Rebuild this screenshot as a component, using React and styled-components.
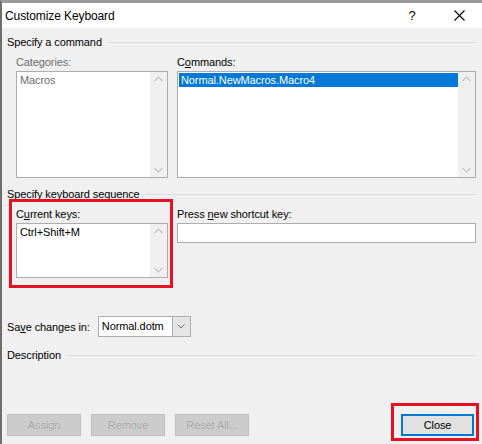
import styled, { createGlobalStyle } from 'styled-components';

const Global = createGlobalStyle`
  html, body { margin: 0; padding: 0; }
  body {
    font-family: "Liberation Sans", Arial, sans-serif;
    font-size: 11px;
    letter-spacing: -0.1px;
    color: #000;
    background: #f0f0f0;
  }
`;

const Window = styled.div`
  width: 482px;
  height: 444px;
  box-sizing: border-box;
  border-top: 3px solid #9b9b9b;
  border-left: 2px solid #6e6e6e;
  background: #f0f0f0;
  display: flex;
  flex-direction: column;
  overflow: hidden;
`;

const TitleBar = styled.div`
  height: 25px;
  background: #fff;
  display: flex;
  align-items: center;
  padding-left: 3px;
`;

const Title = styled.div`
  flex: 1;
  font-size: 12px;
  letter-spacing: -0.1px;
`;

const TitleButton = styled.div`
  width: ${p => p.w}px;
  height: 25px;
  margin-right: ${p => p.mr || 0}px;
  display: flex;
  align-items: center;
  justify-content: center;
  font-size: 13px;
`;

const Body = styled.div`
  flex: 1;
  display: flex;
  flex-direction: column;
  padding: 0 6px 0 5px;
`;

const GroupHeader = styled.div`
  display: flex;
  align-items: center;
  gap: 6px;
  height: 14px;
  line-height: 14px;
  margin-top: ${p => p.mt}px;
  white-space: nowrap;
  &::after {
    content: "";
    flex: 1;
    height: 1px;
    background: #dcdcdc;
  }
`;

const Row = styled.div`
  display: flex;
  gap: 9px;
  padding-left: 9px;
  margin-top: ${p => p.mt}px;
`;

const Column = styled.div`
  width: ${p => (p.w ? p.w + 'px' : 'auto')};
  flex: ${p => (p.w ? 'none' : 1)};
  display: flex;
  flex-direction: column;
  gap: 2px;
  position: relative;
  ${p => p.marked && `
    &::after {
      content: "";
      position: absolute;
      left: -7px;
      top: -8px;
      right: -5px;
      bottom: -10px;
      border: 3px solid #e81123;
      pointer-events: none;
    }
  `}
`;

const Label = styled.div`
  height: 14px;
  line-height: 14px;
  color: ${p => (p.disabled ? '#6d6d6d' : '#000')};
  white-space: nowrap;
`;

const ListBox = styled.div`
  height: ${p => p.h}px;
  box-sizing: border-box;
  border: 1px solid #adadad;
  background: #fff;
  display: flex;
`;

const ListItems = styled.div`
  flex: 1;
  padding: 1px 0 0 1px;
`;

const ListItem = styled.div`
  height: 14px;
  line-height: 14px;
  padding-left: 2px;
  white-space: nowrap;
  color: ${p => (p.selected ? '#fff' : p.disabled ? '#6d6d6d' : '#000')};
  background: ${p => (p.selected ? '#0078d7' : 'transparent')};
`;

const ScrollBar = styled.div`
  width: 17px;
  background: #f0f0f0;
  display: flex;
  flex-direction: column;
  justify-content: space-between;
  align-items: center;
  padding: 4px 0;
`;

const TextInput = styled.div`
  height: 20px;
  box-sizing: border-box;
  border: 1px solid #adadad;
  background: #fff;
`;

const SaveRow = styled.div`
  display: flex;
  align-items: center;
  gap: 8px;
  margin-top: 38px;
`;

const Combo = styled.div`
  width: 93px;
  height: 21px;
  box-sizing: border-box;
  border: 1px solid #adadad;
  background: #fff;
  display: flex;
`;

const ComboText = styled.div`
  flex: 1;
  padding-left: 3px;
  line-height: 19px;
`;

const ComboArrow = styled.div`
  width: 17px;
  background: #e5e5e5;
  border-left: 1px solid #adadad;
  display: flex;
  align-items: center;
  justify-content: center;
`;

const ButtonRow = styled.div`
  display: flex;
  gap: 10px;
  margin-top: 52px;
`;

const Button = styled.div`
  width: ${p => p.w}px;
  height: 22px;
  box-sizing: border-box;
  display: flex;
  align-items: center;
  justify-content: center;
  background: ${p => (p.disabled ? '#cccccc' : '#e1e1e1')};
  border: ${p => (p.primary ? '2px solid #0078d7' : '1px solid #bfbfbf')};
  color: ${p => (p.disabled ? '#a3a3a3' : '#000')};
  text-shadow: ${p => (p.disabled ? '0 0 1px #e8e8e8' : 'none')};
  position: relative;
  margin-left: ${p => (p.push ? 'auto' : '0')};
  margin-right: ${p => (p.push ? '2px' : '0')};
  ${p => p.marked && `
    &::after {
      content: "";
      position: absolute;
      left: -12px;
      top: -13px;
      right: -7px;
      bottom: -7px;
      border: 3px solid #e81123;
      pointer-events: none;
    }
  `}
`;

const Chevron = ({ up }) => (
  <svg width="9" height="6" viewBox="0 0 9 6">
    <polyline
      points={up ? '0.5,5 4.5,1 8.5,5' : '0.5,1 4.5,5 8.5,1'}
      fill="none"
      stroke="#c2c2c2"
      strokeWidth="1.2"
    />
  </svg>
);

const Scroll = () => (
  <ScrollBar>
    <Chevron up />
    <Chevron />
  </ScrollBar>
);

export default function App() {
  return (
    <>
      <Global />
      <Window>
        <TitleBar>
          <Title>Customize Keyboard</Title>
          <TitleButton w={16} mr={16}>?</TitleButton>
          <TitleButton w={46}>
            <svg width="11" height="11" viewBox="0 0 11 11">
              <path d="M0.5 0.5 L10.5 10.5 M10.5 0.5 L0.5 10.5" stroke="#000" strokeWidth="1.1" />
            </svg>
          </TitleButton>
        </TitleBar>
        <Body>
          <GroupHeader mt={7}>Specify a command</GroupHeader>
          <Row mt={6}>
            <Column w={152}>
              <Label disabled>Categories:</Label>
              <ListBox h={107}>
                <ListItems>
                  <ListItem disabled>Macros</ListItem>
                </ListItems>
                <Scroll />
              </ListBox>
            </Column>
            <Column>
              <Label>C<u>o</u>mmands:</Label>
              <ListBox h={107}>
                <ListItems>
                  <ListItem selected>Normal.NewMacros.Macro4</ListItem>
                </ListItems>
                <Scroll />
              </ListBox>
            </Column>
          </Row>
          <GroupHeader mt={9}>Specify keyboard sequence</GroupHeader>
          <Row mt={6}>
            <Column w={152} marked>
              <Label>C<u>u</u>rrent keys:</Label>
              <ListBox h={55}>
                <ListItems>
                  <ListItem>Ctrl+Shift+M</ListItem>
                </ListItems>
                <Scroll />
              </ListBox>
            </Column>
            <Column>
              <Label>Press <u>n</u>ew shortcut key:</Label>
              <TextInput />
            </Column>
          </Row>
          <SaveRow>
            <Label>Sa<u>v</u>e changes in:</Label>
            <Combo>
              <ComboText>Normal.dotm</ComboText>
              <ComboArrow>
                <svg width="8" height="5" viewBox="0 0 8 5">
                  <polyline points="0.5,0.5 4,4 7.5,0.5" fill="none" stroke="#707070" strokeWidth="1" />
                </svg>
              </ComboArrow>
            </Combo>
          </SaveRow>
          <GroupHeader mt={11}>Description</GroupHeader>
          <ButtonRow>
            <Button w={74} disabled>Assign</Button>
            <Button w={74} disabled>Remove</Button>
            <Button w={74} disabled>Reset All...</Button>
            <Button w={73} primary push marked>Close</Button>
          </ButtonRow>
        </Body>
      </Window>
    </>
  );
}
